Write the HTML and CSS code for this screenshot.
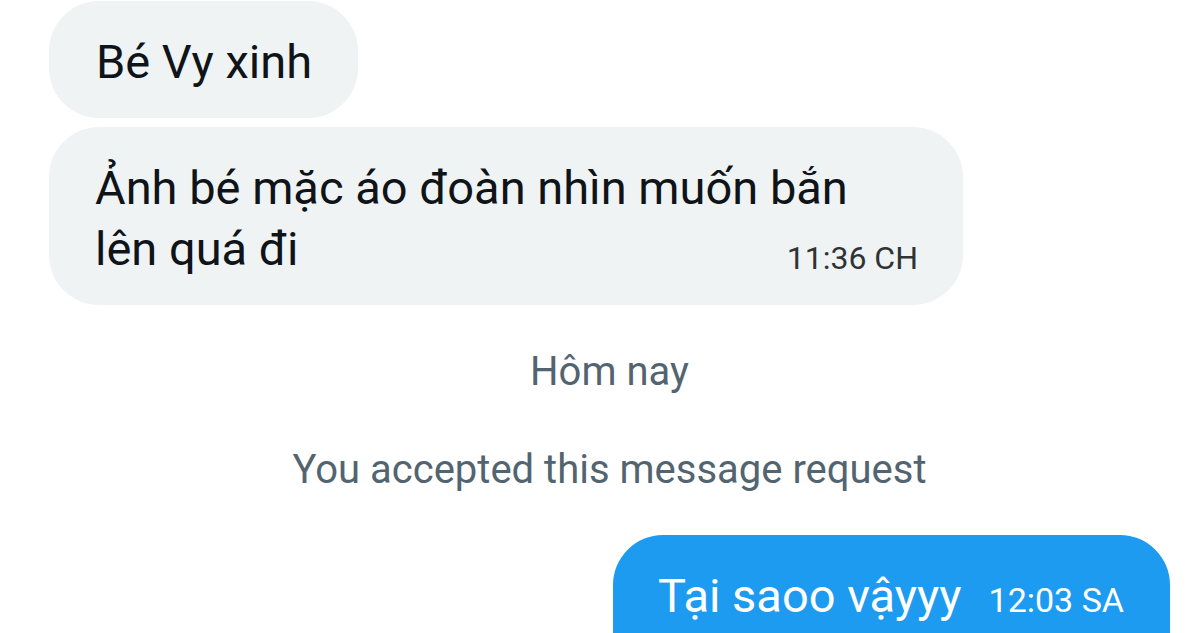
FILE: index.html
```html
<!DOCTYPE html>
<html lang="vi">
<head>
<meta charset="utf-8">
<title>Tin nhắn</title>
<link rel="stylesheet" href="styles.css">
</head>
<body>
<main class="chat">
  <div class="bubble in">
    <p class="msg">Bé Vy xinh</p>
  </div>
  <div class="bubble in wide">
    <p class="msg">Ảnh bé mặc áo đoàn nhìn muốn bắn<br>lên quá đi<span class="time">11:36 CH</span></p>
  </div>
  <div class="sys day">Hôm nay</div>
  <div class="sys note">You accepted this message request</div>
  <div class="bubble out">
    <p class="msg">Tại saoo vậyyy<span class="time inline">12:03 SA</span></p>
  </div>
</main>
</body>
</html>
```
FILE: styles.css
```css
* { box-sizing: border-box; }
html, body { margin: 0; padding: 0; background: #ffffff; }
body {
  font-family: Roboto, "Noto Sans", "Liberation Sans", sans-serif;
  color: #0f1419;
  width: 1189px;
  height: 633px;
  overflow: hidden;
}
.chat {
  display: flex;
  flex-direction: column;
  padding: 1px 19px 0 49px;
}
.bubble {
  border-radius: 50px;
  padding: 30px 46px 26px 47px;
}
.bubble.in {
  align-self: flex-start;
  background: #eff3f4;
}
.bubble.wide {
  margin-top: 9px;
  width: 914px;
  padding-left: 46px;
  padding-right: 45px;
}
.msg {
  margin: 0;
  font-size: 47px;
  line-height: 61px;
}
.time {
  float: right;
  font-size: 32px;
  line-height: 40px;
  margin-top: 20px;
  color: #2f3336;
}
.time.inline {
  float: none;
  font-size: 34px;
  margin: 0 0 0 27px;
  color: #ffffff;
}
.sys {
  align-self: center;
  color: #536471;
  font-size: 40px;
  line-height: 46px;
}
.day { margin-top: 44px; }
.note { margin-top: 52px; }
.bubble.out {
  align-self: flex-end;
  margin-top: 42px;
  background: #1d9bf0;
  color: #ffffff;
  padding-left: 45px;
  height: 98px;
  border-radius: 50px 50px 0 0;
}
```
